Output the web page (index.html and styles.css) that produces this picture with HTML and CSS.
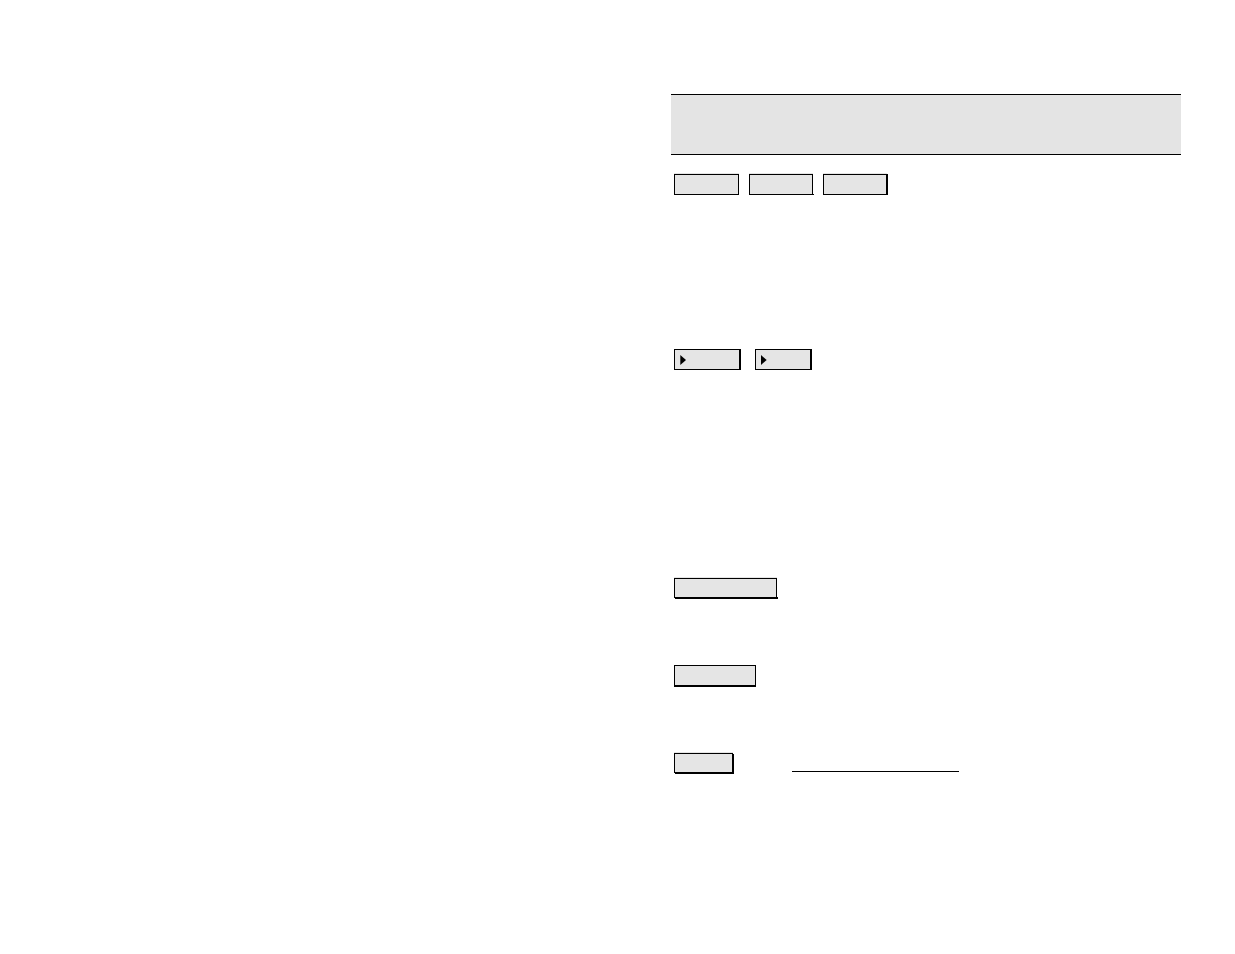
FILE: index.html
```html
<!DOCTYPE html>
<html lang="en">
<head>
<meta charset="utf-8">
<title>Manual spread</title>
<link rel="stylesheet" href="styles.css">
</head>
<body>
<main class="spread">
  <section class="page"></section>
  <section class="page">
    <header class="banner"></header>
    <div class="keys keys-tabs">
      <button class="key lit w65" type="button" aria-label="First"></button>
      <button class="key key-corner lit w64" type="button" aria-label="Second"></button>
      <button class="key key-right lit w64" type="button" aria-label="Third"></button>
    </div>
    <div class="keys keys-menus">
      <button class="key key-right w66" type="button" aria-label="Menu one"><svg class="arrow" viewBox="0 0 6 10" aria-hidden="true"><path d="M0.3 0L6 5L0.3 10Z"/></svg></button>
      <button class="key key-right w56" type="button" aria-label="Menu two"><svg class="arrow" viewBox="0 0 6 10" aria-hidden="true"><path d="M0 0L5.7 5L0 10Z"/></svg></button>
    </div>
    <div class="keys keys-wide">
      <button class="key key-short key-base w103" type="button" aria-label="Wide"></button>
    </div>
    <div class="keys keys-medium">
      <button class="key key-bottom w82" type="button" aria-label="Medium"></button>
    </div>
    <div class="keys keys-last">
      <button class="key key-short key-raised w59" type="button" aria-label="Small"></button>
      <a class="rule-link" href="#" aria-label="Reference"></a>
    </div>
  </section>
</main>
</body>
</html>
```
FILE: styles.css
```css
body {
  margin: 0;
  background: #fff;
  font-family: "Liberation Sans", Arial, sans-serif;
}

.spread {
  display: grid;
  grid-template-columns: 1fr 1fr;
  column-gap: 107px;
  padding: 94px 54px;
}

.banner {
  box-sizing: border-box;
  height: 61px;
  border-top: 1px solid #000;
  border-bottom: 1px solid #000;
  background: #e4e4e4;
}

.keys {
  display: flex;
  align-items: flex-start;
  padding-left: 3px;
}

.keys-tabs { margin-top: 19px; gap: 10px; }
.keys-menus { margin-top: 154px; gap: 15px; }
.keys-wide { margin-top: 208px; }
.keys-medium { margin-top: 67px; }
.keys-last { margin-top: 67px; gap: 59px; }

.key {
  box-sizing: border-box;
  display: flex;
  align-items: center;
  position: relative;
  height: 21px;
  margin: 0;
  padding: 0 5px;
  border: 1px solid #000;
  border-radius: 0;
  background: #e5e5e5;
}

.key-short { height: 20px; }
.lit { box-shadow: 0 -1px #e5e5e5; }
.key-right { box-shadow: 1px 0 #000; }
.key-right.lit { box-shadow: 1px 0 #000, 0 -1px #e5e5e5; }
.key-bottom { box-shadow: 0 1px #000; }
.key-raised { box-shadow: 1px 1px #000, 0 -1px #e5e5e5; }
.key-base { box-shadow: 0 -1px #e5e5e5; }

/* The shadow of this key shows only at its lower right corner. */
.key-corner::after {
  content: "";
  position: absolute;
  right: -2px;
  bottom: -1px;
  width: 1px;
  height: 1px;
  background: #000;
}

/* The shadow of this key shows only along its lower edge. */
.key-base::after {
  content: "";
  position: absolute;
  left: 0;
  right: -2px;
  bottom: -2px;
  height: 2px;
  background: #000;
}

.w56 { width: 56px; }
.w59 { width: 59px; }
.w64 { width: 64px; }
.w65 { width: 65px; }
.w66 { width: 66px; }
.w82 { width: 82px; }
.w103 { width: 103px; }

.arrow {
  width: 6px;
  height: 10px;
  fill: #000;
}

.rule-link {
  box-sizing: border-box;
  width: 167px;
  height: 19px;
  border-bottom: 1px solid #000;
}
```
